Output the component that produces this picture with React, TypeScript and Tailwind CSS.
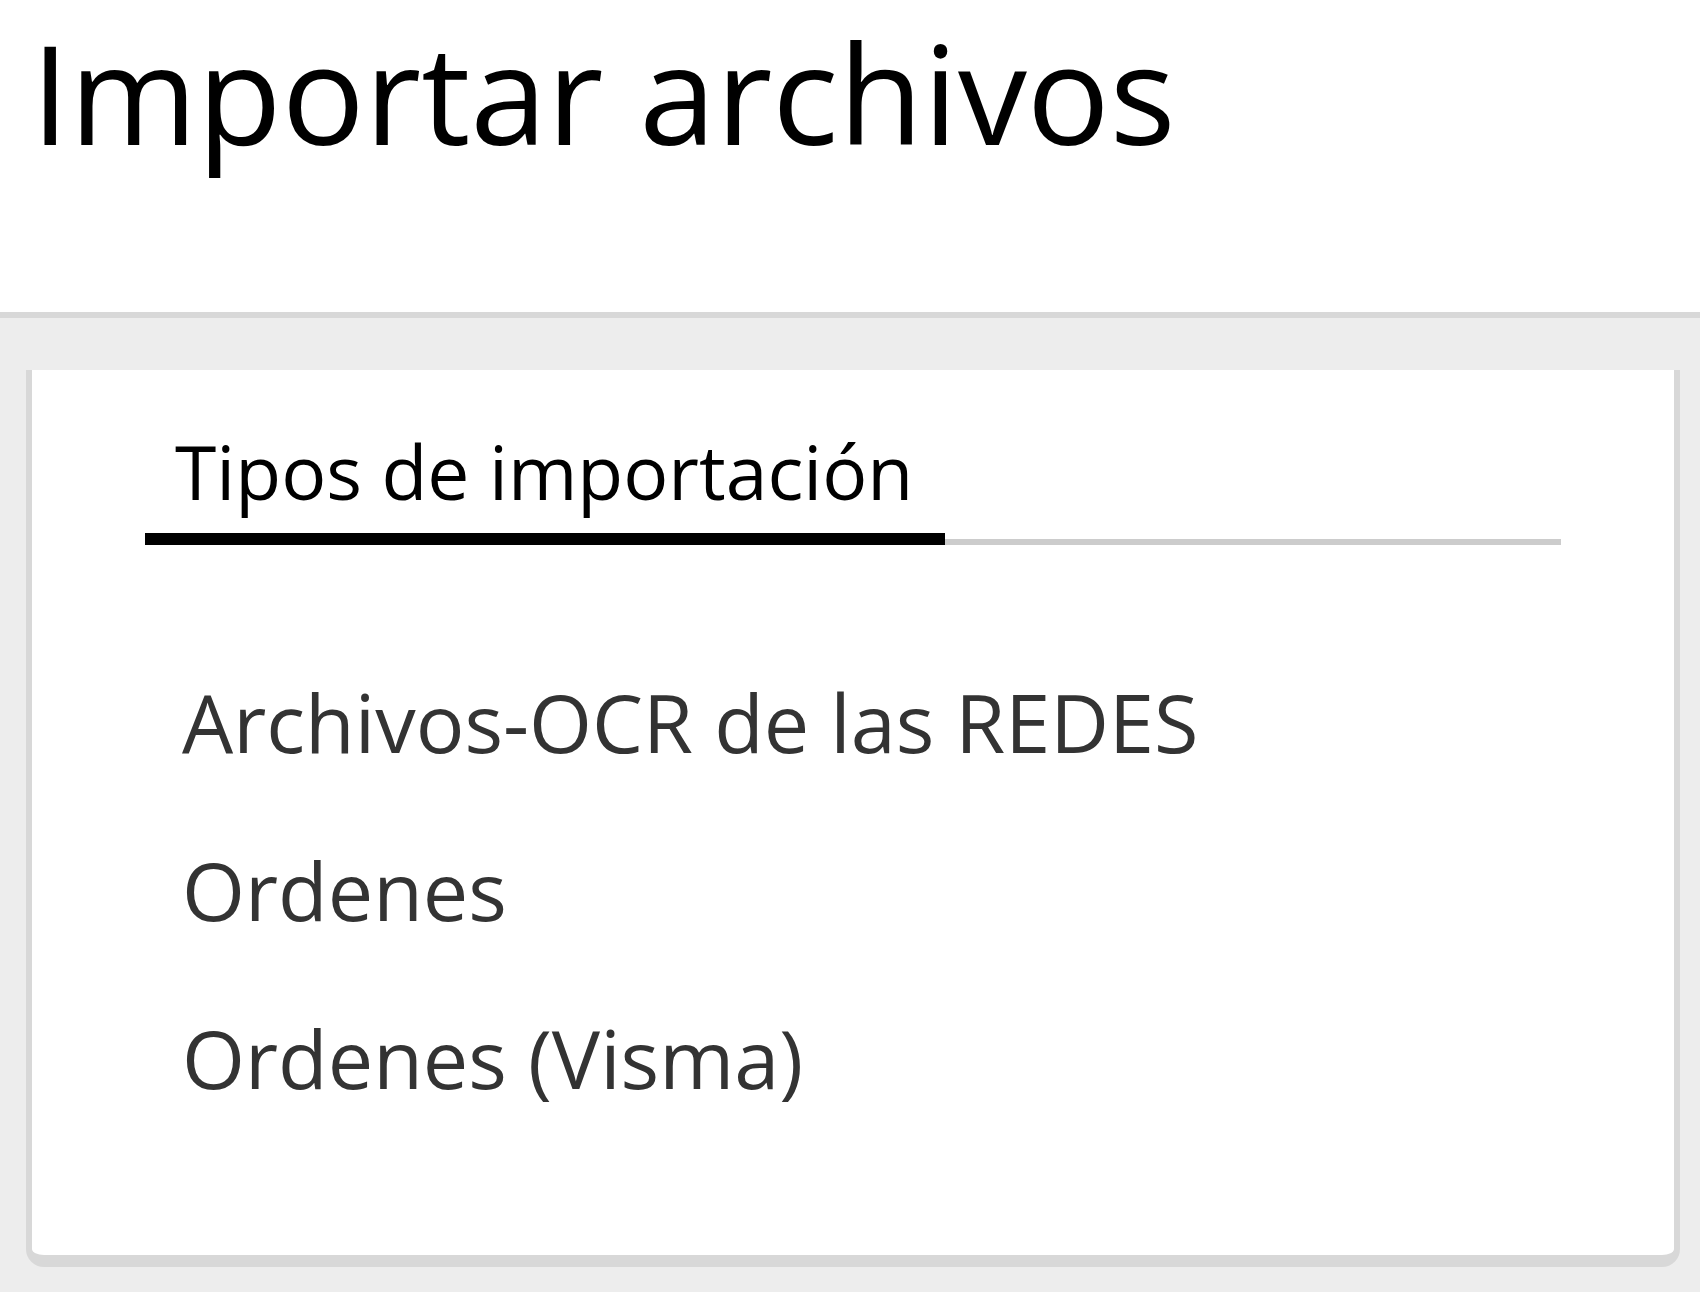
import React from 'react';

const importTypes = ['Archivos-OCR de las REDES', 'Ordenes', 'Ordenes (Visma)'];

const App = () => {
  return (
    <div className="min-h-screen bg-[#ededed] font-['Open_Sans',sans-serif]">
      {/* Page header */}
      <header className="h-[318px] bg-white border-b-[6px] border-[#d8d8d8] pl-[31px] pt-[22px]">
        <h1 className="text-[138px] leading-none font-normal text-black whitespace-nowrap">Importar archivos</h1>
      </header>

      <main className="pt-[52px] pl-[26px] pr-[20px] pb-[25px]">
        <section className="bg-white border-x-[6px] border-b-[12px] border-[#d8d8d8] rounded-b-[18px] px-[113px] pt-[50px] pb-[113px]">
          {/* Tabs */}
          <div className="flex border-b-[6px] border-[#cccccc]">
            <button
              type="button"
              className="-mb-[6px] pl-[30px] pr-[32px] pb-[11px] border-b-[12px] border-black text-[75px] leading-[1.362] text-black"
            >
              Tipos de importación
            </button>
          </div>

          {/* Import type list */}
          <ul className="mt-[93px]">
            {importTypes.map((t) => (
              <li key={t} className="pl-[37px] py-[28px] text-[81px] leading-[112px] text-[#333333]">
                {t}
              </li>
            ))}
          </ul>
        </section>
      </main>
    </div>
  );
};

export default App;
